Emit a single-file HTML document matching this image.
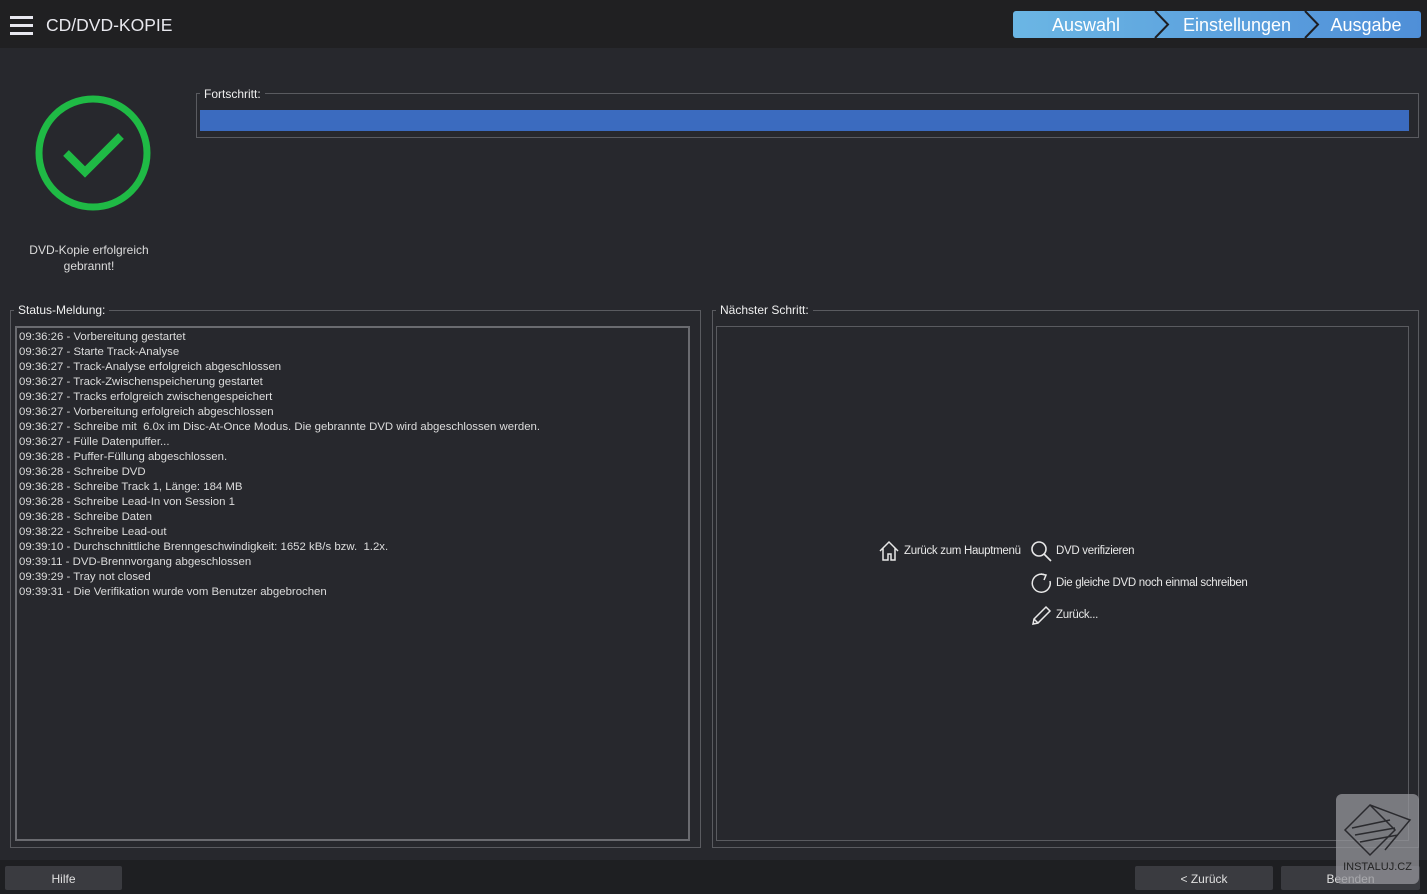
<!DOCTYPE html>
<html><head><meta charset="utf-8"><style>
*{margin:0;padding:0;box-sizing:border-box}
body{width:1427px;height:894px;background:#27282d;font-family:"Liberation Sans",sans-serif;color:#e6e6e6;position:relative;overflow:hidden}
.a{position:absolute}
.hdr{left:0;top:0;width:1427px;height:48px;background:#202022}
.gb{border:1px solid #5a5b60}
.lbl{background:#27282d;padding:0 4px;font-size:12px;color:#f0f0f0}
.log div{font-size:11.4px;line-height:15px;color:#dcdcdc;white-space:nowrap}
.btn{background:#3a3b40;border-radius:2px;font-size:12px;color:#e0e0e0;text-align:center;line-height:26px;height:24px;top:866px}
.act{font-size:11.5px;color:#e8e8e8;letter-spacing:-0.3px}
</style></head><body>
<div class="a hdr"></div>
<div class="a" style="left:10px;top:16px;width:23px;height:3px;background:#e8e8f0"></div>
<div class="a" style="left:10px;top:24px;width:23px;height:3px;background:#e8e8f0"></div>
<div class="a" style="left:10px;top:32px;width:23px;height:3px;background:#e8e8f0"></div>
<div class="a" style="left:46px;top:15px;font-size:17.5px;color:#e8e8ee">CD/DVD-KOPIE</div>
<svg class="a" style="left:1013px;top:11px" width="408" height="27">
<defs><linearGradient id="g" x1="0" x2="1"><stop offset="0" stop-color="#6bb6e4"/><stop offset="1" stop-color="#4f8fd8"/></linearGradient></defs>
<rect x="0" y="0" width="408" height="27" rx="3" fill="url(#g)"/>
<polyline points="142,0 155,13.5 142,27" fill="none" stroke="#1e1e22" stroke-width="2"/>
<polyline points="292,0 305,13.5 292,27" fill="none" stroke="#1e1e22" stroke-width="2"/>
<text x="73" y="20" font-size="18" fill="#fff" text-anchor="middle" font-family="Liberation Sans">Auswahl</text>
<text x="224" y="20" font-size="18" fill="#fff" text-anchor="middle" font-family="Liberation Sans">Einstellungen</text>
<text x="353" y="20" font-size="18" fill="#fff" text-anchor="middle" font-family="Liberation Sans">Ausgabe</text>
</svg>
<svg class="a" style="left:33px;top:94px" width="120" height="120"><circle cx="60" cy="59" r="54" fill="none" stroke="#1fba45" stroke-width="7"/><polyline points="33,59 52,78 88,42" fill="none" stroke="#1fba45" stroke-width="8"/></svg>
<div class="a" style="left:20px;top:242px;width:138px;text-align:center;font-size:12px;line-height:16px;color:#dcdcdc">DVD-Kopie erfolgreich gebrannt!</div>
<div class="a gb" style="left:196px;top:93px;width:1223px;height:45px"></div>
<div class="a lbl" style="left:200px;top:87px">Fortschritt:</div>
<div class="a" style="left:200px;top:110px;width:1209px;height:21px;background:#3b6bbf"></div>
<div class="a gb" style="left:10px;top:310px;width:691px;height:538px"></div>
<div class="a lbl" style="left:14px;top:303px">Status-Meldung:</div>
<div class="a" style="left:15px;top:326px;width:675px;height:515px;border:2px solid #6a6b70"></div>
<div class="a log" style="left:19px;top:330px">
<div>09:36:26 - Vorbereitung gestartet</div>
<div>09:36:27 - Starte Track-Analyse</div>
<div>09:36:27 - Track-Analyse erfolgreich abgeschlossen</div>
<div>09:36:27 - Track-Zwischenspeicherung gestartet</div>
<div>09:36:27 - Tracks erfolgreich zwischengespeichert</div>
<div>09:36:27 - Vorbereitung erfolgreich abgeschlossen</div>
<div>09:36:27 - Schreibe mit&nbsp; 6.0x im Disc-At-Once Modus. Die gebrannte DVD wird abgeschlossen werden.</div>
<div>09:36:27 - Fülle Datenpuffer...</div>
<div>09:36:28 - Puffer-Füllung abgeschlossen.</div>
<div>09:36:28 - Schreibe DVD</div>
<div>09:36:28 - Schreibe Track 1, Länge: 184 MB</div>
<div>09:36:28 - Schreibe Lead-In von Session 1</div>
<div>09:36:28 - Schreibe Daten</div>
<div>09:38:22 - Schreibe Lead-out</div>
<div>09:39:10 - Durchschnittliche Brenngeschwindigkeit: 1652 kB/s bzw.&nbsp; 1.2x.</div>
<div>09:39:11 - DVD-Brennvorgang abgeschlossen</div>
<div>09:39:29 - Tray not closed</div>
<div>09:39:31 - Die Verifikation wurde vom Benutzer abgebrochen</div>
</div>
<div class="a gb" style="left:712px;top:310px;width:707px;height:538px"></div>
<div class="a lbl" style="left:716px;top:303px">Nächster Schritt:</div>
<div class="a" style="left:716px;top:326px;width:693px;height:515px;border:1px solid #5a5b60"></div>
<svg class="a" style="left:878px;top:540px" width="24" height="22" fill="none" stroke="#e8e8e8" stroke-width="1.5"><path d="M2 11 L11 2 L20 11 M5 8 V20 H10 V14 H13 V20 H17 V8"/></svg>
<div class="a act" style="left:904px;top:545px">Zurück zum Hauptmenü</div>
<svg class="a" style="left:1030px;top:540px" width="24" height="24" fill="none" stroke="#e8e8e8" stroke-width="1.6"><circle cx="9" cy="9" r="7"/><path d="M14 14 L21 21"/></svg>
<div class="a act" style="left:1056px;top:545px">DVD verifizieren</div>
<svg class="a" style="left:1030px;top:572px" width="24" height="24" fill="none" stroke="#e8e8e8" stroke-width="1.5"><path d="M15 3 A9 9 0 1 0 20 9"/><path d="M11 2 L16 3 L14 8"/></svg>
<div class="a act" style="left:1056px;top:577px">Die gleiche DVD noch einmal schreiben</div>
<svg class="a" style="left:1030px;top:604px" width="24" height="24" fill="none" stroke="#e8e8e8" stroke-width="1.5"><path d="M3 20 L4 15 L16 3 L20 7 L8 19 Z M4 15 L8 19"/></svg>
<div class="a act" style="left:1056px;top:609px">Zurück...</div>
<div class="a" style="left:0;top:860px;width:1427px;height:34px;background:#1e1f22"></div>
<div class="a btn" style="left:5px;width:117px">Hilfe</div>
<div class="a btn" style="left:1135px;width:138px">&lt; Zurück</div>
<div class="a btn" style="left:1281px;width:139px">Beenden</div>
<div class="a" style="left:1336px;top:794px;width:83px;height:90px;background:rgba(150,150,155,0.75);border-radius:6px"></div>
<svg class="a" style="left:1340px;top:800px" width="76" height="62" fill="none" stroke="#2a2a2e" stroke-width="1.5"><path d="M5 30 L30 5 L55 30 L30 55 Z M30 5 L70 20 L45 50 M12 28 L50 20 M15 35 L55 28 M20 42 L58 35"/></svg>
<div class="a" style="left:1336px;top:861px;width:83px;text-align:center;font-size:11px;color:#222">INSTALUJ.CZ</div>
</body></html>
